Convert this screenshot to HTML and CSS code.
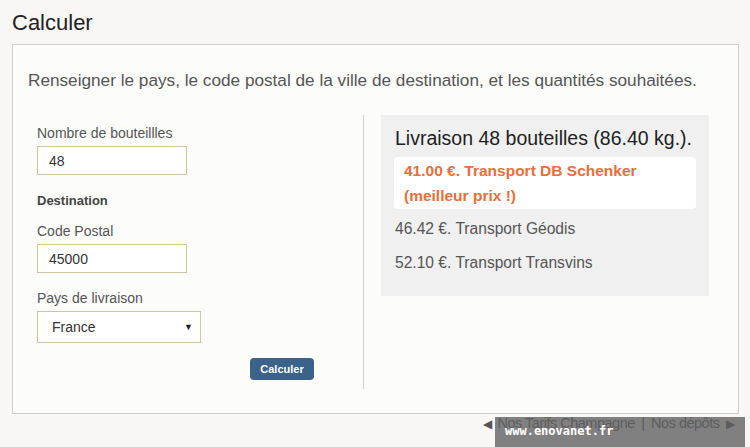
FILE: index.html
```html
<!DOCTYPE html>
<html lang="fr">
<head>
    <meta charset="UTF-8">
    <meta name="viewport" content="width=device-width, initial-scale=1.0">
    <title>Calculer</title>
    <link rel="stylesheet" href="styles.css">
</head>
<body>
    <h1 class="page-title">Calculer</h1>
    <div class="calc-box">
        <p class="intro">Renseigner le pays, le code postal de la ville de destination, et les quantités souhaitées.</p>
        <div class="cols">
            <form class="calc-form" id="calcForm">
                <label class="field-label" for="qty">Nombre de bouteillles</label>
                <input class="field-input" type="text" id="qty" value="48">

                <div class="section-title">Destination</div>

                <label class="field-label" for="cp">Code Postal</label>
                <input class="field-input" type="text" id="cp" value="45000">

                <label class="field-label" for="pays">Pays de livraison</label>
                <div class="select-wrap">
                    <select class="field-select" id="pays">
                        <option>France</option>
                    </select>
                    <span class="select-arrow">&#9660;</span>
                </div>

                <button type="submit" class="btn-calc">Calculer</button>
            </form>
            <div class="result-col">
                <div class="result-panel">
                    <div class="result-title">Livraison 48 bouteilles (86.40 kg.).</div>
                    <div class="best-price">41.00 €. Transport DB Schenker<br>(meilleur prix !)</div>
                    <div class="price-line">46.42 €. Transport Géodis</div>
                    <div class="price-line">52.10 €. Transport Transvins</div>
                </div>
            </div>
        </div>
    </div>
    <div class="page-nav">
        <span class="nav-arrow">&#9664;</span> Nos Tarifs Champagne <span class="nav-sep">|</span> Nos dépôts <span class="nav-arrow">&#9654;</span>
    </div>
    <div class="watermark">www.enovanet.fr</div>
</body>
</html>
```

FILE: styles.css
```css
body {
    font-family: "Liberation Sans", Arial, sans-serif;
    margin: 0;
    padding: 0 11px 0 12px;
    background-color: #f8f7f5;
    color: #555;
    height: 447px;
    overflow: hidden;
}

.page-title {
    font-size: 22px;
    font-weight: normal;
    color: #222;
    margin: 0;
    padding-top: 10px;
    height: 34px;
    line-height: 26px;
}

.calc-box {
    border: 1px solid #cfcfcf;
    background-color: #fcfcfb;
    height: 368px;
}

.intro {
    font-size: 17.2px;
    line-height: 20px;
    margin: 25px 0 0 15px;
    color: #555;
}

.cols {
    display: flex;
    margin-top: 25px;
}

.calc-form {
    display: flex;
    flex-direction: column;
    align-items: flex-start;
    width: 326px;
    padding: 10px 0 9px 24px;
    border-right: 1px solid #cfcfcf;
}

.field-label {
    font-size: 14px;
    line-height: 16px;
    color: #555;
    margin-bottom: 5px;
}

.field-input {
    box-sizing: border-box;
    width: 150px;
    height: 29px;
    border: 1px solid #cdc79d;
    background: #fff;
    padding: 0 11px;
    font-family: "Liberation Sans", Arial, sans-serif;
    font-size: 14px;
    color: #333;
    margin: 0 0 17px;
}

.section-title {
    font-size: 13px;
    font-weight: bold;
    color: #444;
    line-height: 16px;
    margin: 1px 0 14px;
}

.select-wrap {
    position: relative;
    width: 164px;
}

.field-select {
    box-sizing: border-box;
    width: 164px;
    height: 32px;
    border: 1px solid #cdc79d;
    background: #fff;
    padding: 0 0 0 14px;
    font-family: "Liberation Sans", Arial, sans-serif;
    font-size: 14px;
    color: #333;
    appearance: none;
    -webkit-appearance: none;
    border-radius: 0;
}

.select-arrow {
    position: absolute;
    right: 8px;
    top: 11px;
    font-size: 9px;
    color: #222;
    pointer-events: none;
}

.btn-calc {
    margin: 15px 0 0 213px;
    width: 64px;
    height: 22px;
    padding: 0;
    border: none;
    border-radius: 4px;
    background-color: #3b6289;
    color: #fff;
    font-family: "Liberation Sans", Arial, sans-serif;
    font-size: 11px;
    font-weight: bold;
    cursor: pointer;
}

.result-col {
    padding-left: 17px;
}

.result-panel {
    width: 302px;
    padding: 12px 13px 24px;
    background-color: #f0f0f0;
}

.result-title {
    font-size: 19.5px;
    line-height: 22px;
    color: #222;
    margin: 0 0 8px 1px;
}

.best-price {
    background-color: #fff;
    border-radius: 4px;
    padding: 1px 10px;
    font-size: 15.5px;
    font-weight: bold;
    line-height: 25px;
    color: #e86f3a;
    margin-bottom: 11px;
}

.price-line {
    font-size: 15.6px;
    line-height: 18px;
    color: #555;
    margin: 0 0 16px 1px;
}

.price-line:last-child {
    margin-bottom: 0;
}

.page-nav {
    text-align: right;
    font-size: 14.5px;
    letter-spacing: -0.5px;
    color: #555;
    margin-top: 1px;
    padding-right: 4px;
}

.nav-arrow {
    font-size: 12px;
    letter-spacing: 0;
}

.nav-arrow:first-child {
    margin-right: 2px;
}

.nav-arrow:last-child {
    margin-left: 3px;
}

.nav-sep {
    margin: 0 3px;
}

.watermark {
    position: absolute;
    left: 495px;
    top: 417px;
    width: 240px;
    height: 30px;
    padding-left: 10px;
    background-color: rgba(95, 95, 95, 0.78);
    color: #fff;
    font-family: "DejaVu Sans Mono", monospace;
    font-weight: bold;
    font-size: 12px;
    line-height: 28px;
}
```
